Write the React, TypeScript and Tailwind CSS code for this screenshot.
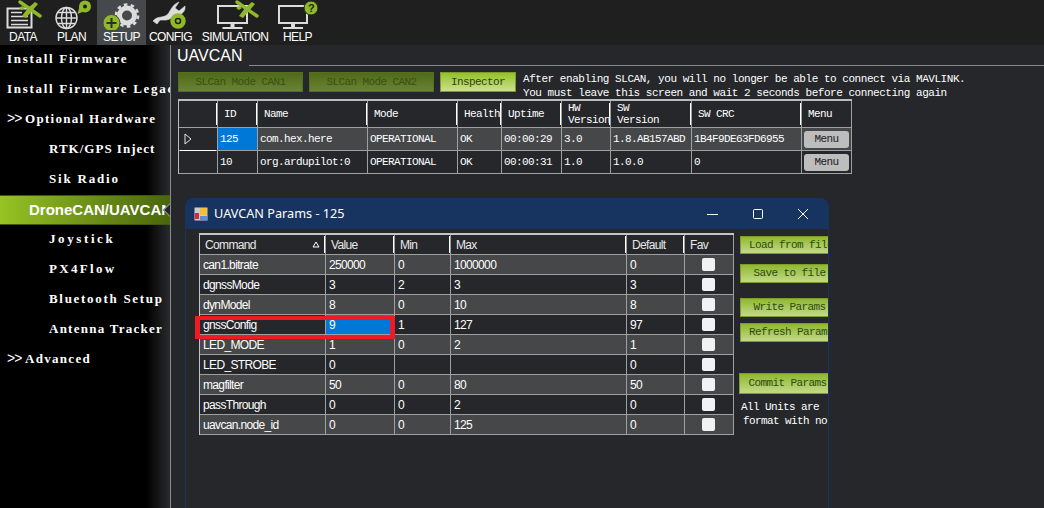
import React from 'react';

const mono = "font-['Liberation_Mono',monospace]";
const GREEN = '#8fb82a';
const GRAY = '#dcdcdc';

const Plane = ({ x, y }: { x: number; y: number }) => (
  <g transform={`translate(${x} ${y})`}>
    <path d="M1 1 L21 15" stroke={GREEN} strokeWidth="3.4" strokeLinecap="round" />
    <path d="M16 1 L19 3 L13 10 L7 17 L3 15 L9 7 Z" fill={GREEN} />
    <path d="M0 7 L3 5 L6 7 L3 9 Z" fill={GREEN} />
  </g>
);

const DataIcon = () => (
  <svg width="46" height="30" viewBox="0 0 46 30" fill="none">
    <path d="M7.5 8.5 H31.5 V27.5 H7.5 Z" stroke={GRAY} strokeWidth="2" />
    <path d="M11 12.5 H22 M11 16.5 H28 M11 20.5 H28 M11 24.5 H28" stroke={GRAY} strokeWidth="1.6" />
    <Plane x={19} y={1} />
  </svg>
);

const PlanIcon = () => (
  <svg width="51" height="30" viewBox="46 0 51 30" fill="none">
    <g stroke={GRAY} strokeWidth="1.4">
      <circle cx="66.5" cy="18" r="10.5" />
      <ellipse cx="66.5" cy="18" rx="5" ry="10.5" />
      <path d="M56 18 H77 M58 12.5 H75 M58 23.5 H75 M66.5 7.5 V28.5" />
    </g>
    <path d="M77.5 14 L80.5 3 L90 9 Z" fill={GREEN} />
    <circle cx="85" cy="6.5" r="6" fill={GREEN} />
    <circle cx="85" cy="6.5" r="2" fill="#1f1f1f" />
  </svg>
);

const SetupIcon = () => (
  <svg width="49" height="30" viewBox="97 0 49 30" fill="none">
    <circle cx="127" cy="15.5" r="7.5" stroke={GRAY} strokeWidth="5" />
    <circle cx="127" cy="15.5" r="11" stroke={GRAY} strokeWidth="2.6" strokeDasharray="3.6 3.3" />
    <circle cx="111.5" cy="23" r="8.5" fill={GREEN} stroke="#46494c" strokeWidth="1" />
    <path d="M106.5 23 H116.5 M111.5 18 V28" stroke="#2b2d2e" strokeWidth="2" />
  </svg>
);

const ConfigIcon = () => (
  <svg width="49" height="30" viewBox="146 0 49 30" fill="none">
    <path d="M153 21 C158 15 163 19 168 14 C171 10 172 5 179 2 L175 8 L179 11 L185 6 C186 13 179 16 173 17 C168 21 164 20 160 20 L157 24 Z" fill={GRAY} stroke={GRAY} strokeWidth="0.6" />
    <circle cx="178" cy="21" r="5.5" stroke={GREEN} strokeWidth="4.5" />
    <circle cx="178" cy="21" r="1.8" fill={GREEN} />
  </svg>
);

const Monitor = ({ x, w }: { x: number; w: number }) => (
  <g stroke={GRAY}>
    <path d={`M${x} 6 H${x + w} V23 H${x} Z`} strokeWidth="2" fill="none" />
    <path d={`M${x + w / 2} 23 V27`} strokeWidth="4" />
    <path d={`M${x + w / 2 - 10} 28 H${x + w / 2 + 10}`} strokeWidth="2" />
  </g>
);

const SimIcon = () => (
  <svg width="80" height="30" viewBox="195 0 80 30" fill="none">
    <Monitor x={218} w={29} />
    <Plane x={236} y={1} />
  </svg>
);

const HelpIcon = () => (
  <svg width="45" height="30" viewBox="275 0 45 30" fill="none">
    <Monitor x={279} w={28} />
    <circle cx="311" cy="8" r="7" fill={GREEN} stroke="#1f1f1f" />
    <text x="311" y="12" textAnchor="middle" fontSize="11" fontWeight="700" fill="#1f1f1f" fontFamily="Liberation Sans">?</text>
  </svg>
);

const navItems = [
  { label: 'DATA', icon: <DataIcon />, w: 'w-[46px]' },
  { label: 'PLAN', icon: <PlanIcon />, w: 'w-[51px]' },
  { label: 'SETUP', icon: <SetupIcon />, w: 'w-[49px] bg-[#46494c]' },
  { label: 'CONFIG', icon: <ConfigIcon />, w: 'w-[49px]' },
  { label: 'SIMULATION', icon: <SimIcon />, w: 'w-[80px]' },
  { label: 'HELP', icon: <HelpIcon />, w: 'w-[45px]' },
];

const sideItems = [
  { label: 'Install Firmware', cls: 'pl-[7px] tracking-[1.7px]' },
  { label: 'Install Firmware Legacy', cls: 'pl-[7px] tracking-[1.7px]' },
  { label: 'Optional Hardware', cls: 'pl-[7px] tracking-[1.3px]', arrows: true },
  { label: 'RTK/GPS Inject', cls: 'pl-[49px] tracking-[1px]' },
  { label: 'Sik Radio', cls: 'pl-[49px] tracking-[1.8px]' },
  { label: 'DroneCAN/UAVCAN', cls: 'pl-[29px]', active: true },
  { label: 'Joystick', cls: 'pl-[49px] tracking-[2.6px]' },
  { label: 'PX4Flow', cls: 'pl-[49px] tracking-[2.3px]' },
  { label: 'Bluetooth Setup', cls: 'pl-[49px] tracking-[1.7px]' },
  { label: 'Antenna Tracker', cls: 'pl-[49px] tracking-[1.25px]' },
  { label: 'Advanced', cls: 'pl-[7px] tracking-[1.3px]', arrows: true },
];

const nodeCols = 'grid grid-cols-[39px_40px_110px_90px_44px_60px_49px_81px_110px_50px]';
const nodeHeaders = ['', 'ID', 'Name', 'Mode', 'Health', 'Uptime', 'HW|Version', 'SW|Version', 'SW CRC', 'Menu'];
const nodes = [
  { bg: 'bg-[#464749]', id: '125', cells: ['com.hex.here', 'OPERATIONAL', 'OK', '00:00:29', '3.0', '1.8.AB157ABD', '1B4F9DE63FD6955'], sel: true },
  { bg: 'bg-[#26272a]', id: '10', cells: ['org.ardupilot:0', 'OPERATIONAL', 'OK', '00:00:31', '1.0', '1.0.0', '0'], sel: false },
];

const paramCols = 'grid grid-cols-[126px_69px_56px_176px_58px_49px]';
const paramHeaders = ['Command', 'Value', 'Min', 'Max', 'Default', 'Fav'];
const params = [
  ['can1.bitrate', '250000', '0', '1000000', '0'],
  ['dgnssMode', '3', '2', '3', '3'],
  ['dynModel', '8', '0', '10', '8'],
  ['gnssConfig', '9', '1', '127', '97'],
  ['LED_MODE', '1', '0', '2', '1'],
  ['LED_STROBE', '0', '', '', '0'],
  ['magfilter', '50', '0', '80', '50'],
  ['passThrough', '0', '0', '2', '0'],
  ['uavcan.node_id', '0', '0', '125', '0'],
];

const greenBtn = `flex items-center justify-center whitespace-nowrap ${mono} text-[11px] tracking-[-0.6px] text-[#2f4a10] bg-gradient-to-b from-[#8fb82a] to-[#c3da84] border border-[#7d9c2c]`;

const NodeTable = () => (
  <div className={`ml-[7px] mt-[7px] w-fit border-l border-t-2 border-[#bdbdbd] ${mono} text-[11px] tracking-[-0.6px] text-white`}>
    <div className={`${nodeCols} h-[27px] border-b border-[#a0a0a0]`}>
      {nodeHeaders.map((h, i) => (
        <div key={i} className="relative flex flex-col items-start justify-center border-r border-[#a0a0a0] pl-[6px] leading-[12px]">
          {i > 0 && <span className="absolute -left-[2px] top-[2px] bottom-[2px] w-[1px] bg-white" />}
          {h.split('|').map((part) => (
            <span key={part}>{part}</span>
          ))}
        </div>
      ))}
    </div>
    {nodes.map((n) => (
      <div key={n.id} className={`${nodeCols} h-[23px] border-b border-[#a0a0a0] ${n.bg}`}>
        <div className="relative flex items-center border-r border-[#a0a0a0] bg-[#26272a] pl-[5px]">
          {n.sel && (
            <>
              <svg width="8" height="12" viewBox="0 0 8 12" fill="none">
                <path d="M1 1 L7 6 L1 11 Z" stroke="#e8e8e8" strokeWidth="1" />
              </svg>
              <span className="absolute left-[1px] right-[1px] -bottom-[1px] h-[1px] bg-white" />
            </>
          )}
        </div>
        <div className={`flex items-center border-r border-[#a0a0a0] pl-[2px] ${n.sel ? 'bg-[#0078d7]' : ''}`}>{n.id}</div>
        {n.cells.map((c, i) => (
          <div key={i} className="flex items-center overflow-hidden whitespace-nowrap border-r border-[#a0a0a0] pl-[2px]">{c}</div>
        ))}
        <div className="flex items-center justify-center border-r border-[#a0a0a0]">
          <div className="flex h-[17px] w-[45px] items-center justify-center rounded-[3px] bg-[#bdbdbd] text-[#1a1a1a]">Menu</div>
        </div>
      </div>
    ))}
  </div>
);

const ParamsWindow = () => (
  <div className="absolute left-[14px] top-[153px] h-[320px] w-[644px] overflow-hidden rounded-t-[8px] border-x border-[#17335f] bg-[#26272a]">
    <div className="flex h-[31px] items-center bg-[#17335f] pl-[8px] text-white">
      <svg width="14" height="14" viewBox="0 0 14 14">
        <rect x="0.5" y="0.5" width="13" height="13" fill="#c9ccd6" />
        <rect x="6" y="1" width="7" height="7" fill="#f2c230" />
        <rect x="1" y="6" width="4" height="6" fill="#c8332c" />
        <rect x="6" y="9" width="7" height="4" fill="#5b8fd8" />
      </svg>
      <span className="ml-[6px] font-['Noto_Sans',sans-serif] text-[12.7px]">UAVCAN Params - 125</span>
      <div className="ml-auto flex items-center">
        <svg width="45" height="12" viewBox="0 0 45 12" fill="none" stroke="#fff" strokeWidth="1">
          <path d="M0 6.5 H11" />
        </svg>
        <svg width="45" height="12" viewBox="0 0 45 12" fill="none" stroke="#fff" strokeWidth="1">
          <rect x="1.5" y="1.5" width="9" height="9" rx="1" />
        </svg>
        <svg width="31" height="12" viewBox="0 0 31 12" fill="none" stroke="#fff" strokeWidth="1">
          <path d="M1 1 L11 11 M11 1 L1 11" />
        </svg>
      </div>
    </div>
    <div className="flex items-start pl-[13px] pt-[4px]">
      <div className="relative w-fit border-l border-t-2 border-[#c4c4c4] font-['Liberation_Sans',sans-serif] text-[12px] tracking-[-0.65px] text-white">
        <div className={`${paramCols} h-[20px] border-b border-[#a0a0a0]`}>
          {paramHeaders.map((h, i) => (
            <div key={h} className="relative flex items-center border-r border-[#a0a0a0] pl-[5px] text-[#e8e8e8]">
              {i > 0 && <span className="absolute -left-[2px] top-[1px] bottom-[1px] w-[1px] bg-white" />}
              {h}
              {i === 0 && (
                <svg className="absolute right-[5px] top-[6px]" width="8" height="7" viewBox="0 0 8 7" fill="none" stroke="#fff">
                  <path d="M4 1 L7 6 H1 Z" />
                </svg>
              )}
            </div>
          ))}
        </div>
        {params.map((row, r) => (
          <div key={row[0]} className={`${paramCols} h-[20px] border-b border-[#a0a0a0] ${r % 2 === 0 ? 'bg-[#464749]' : 'bg-[#26272a]'}`}>
            {row.map((c, i) => (
              <div key={i} className={`flex items-center border-r border-[#a0a0a0] pl-[3px] ${r === 3 && i === 1 ? 'bg-[#0078d7]' : ''}`}>{c}</div>
            ))}
            <div className="flex items-center justify-center border-r border-[#a0a0a0]">
              <span className="mr-[1px] h-[13px] w-[13px] rounded-[2px] bg-[#f2f2f2]" />
            </div>
          </div>
        ))}
        <div className="absolute left-[-5px] top-[81px] h-[23px] w-[200px] border-[4px] border-l-[5px] border-r-[5px] border-[#ed1c24]" />
      </div>
      <div className="ml-[6px] flex w-[87px] shrink-0 flex-col">
        <div className={`${greenBtn} mt-[3px] h-[18px] w-[102px]`}>Load from file</div>
        <div className={`${greenBtn} mt-[10px] h-[19px] w-[96px] pl-[3px]`}>Save to file</div>
        <div className={`${greenBtn} mt-[15px] h-[19px] w-[96px] pl-[3px]`}>Write Params</div>
        <div className={`${greenBtn} mt-[6px] h-[19px] w-[102px]`}>Refresh Params</div>
        <div className={`${greenBtn} -ml-px mt-[31px] h-[21px] w-[97px]`}>Commit Params</div>
        <div className={`mt-[6px] w-[200px] whitespace-nowrap pl-[1px] ${mono} text-[11px] leading-[14px] tracking-[-0.6px] text-white`}>
          All Units are
          <br />
          <span className="pl-[2px]">format with no</span>
        </div>
      </div>
    </div>
  </div>
);

export default function App() {
  return (
    <div className="flex h-[508px] w-[1044px] flex-col overflow-hidden bg-[#26272a]">
      <nav className="flex h-[45px] shrink-0 bg-[#1f1f1f] font-['Liberation_Sans',sans-serif] text-[12px] tracking-[-0.6px] text-white">
        {navItems.map((n) => (
          <div key={n.label} className={`flex flex-col items-center ${n.w}`}>
            <div className="h-[30px]">{n.icon}</div>
            <span className="leading-[14px]">{n.label}</span>
          </div>
        ))}
      </nav>
      <div className="flex min-h-0 flex-1">
        <aside className="w-[171px] shrink-0 overflow-hidden border-r border-[#8a8a8a] bg-[linear-gradient(to_right,#000_86%,#2a2b2d_100%)] font-['Liberation_Serif',serif] text-[13px] font-bold text-white">
          {sideItems.map((s) =>
            s.active ? (
              <div key={s.label} className="relative flex h-[30px] items-center overflow-hidden whitespace-nowrap border-y border-[#3f5a10] bg-gradient-to-r from-[#97c324] to-[#4a650c] pl-[29px] font-['Liberation_Sans',sans-serif] text-[15px]">
                {s.label}
                <span className="absolute -right-[5px] top-[9px] h-[10px] w-[10px] rotate-45 border border-[#a0a0a0] bg-[#26272a]" />
              </div>
            ) : (
              <div key={s.label} className={`flex h-[30px] items-center whitespace-nowrap pb-[3px] ${s.cls}`}>
                {s.arrows && <span className="mr-[3px] w-[15px] font-['Liberation_Sans',sans-serif] text-[14px] font-normal tracking-[-1px]">&gt;&gt;</span>}
                {s.label}
              </div>
            ),
          )}
        </aside>
        <main className="relative min-w-0 flex-1">
          <div className="flex h-[21px] items-end">
            <h1 className="w-[78px] pl-[6px] font-['Liberation_Sans',sans-serif] text-[16px] leading-[20px] text-white">UAVCAN</h1>
            <div className="flex-1 border-b border-[#8a8a8a]" />
          </div>
          <div className="ml-[7px] mt-[6px] flex h-[20px]">
            <div className={`flex w-[125px] items-center justify-center border border-[#55701d] bg-gradient-to-b from-[#4f6a18] to-[#6b8335] ${mono} text-[11px] tracking-[-0.6px] text-[#3a5012]`}>SLCan Mode CAN1</div>
            <div className={`ml-[6px] flex w-[125px] items-center justify-center border border-[#55701d] bg-gradient-to-b from-[#4f6a18] to-[#6b8335] ${mono} text-[11px] tracking-[-0.6px] text-[#3a5012]`}>SLCan Mode CAN2</div>
            <div className={`ml-[6px] flex w-[76px] items-center justify-center border border-[#7d9c2c] bg-gradient-to-b from-[#94c11f] to-[#cde08a] ${mono} text-[11px] tracking-[-0.6px] text-[#2f3f10]`}>Inspector</div>
            <p className={`ml-[7px] whitespace-nowrap ${mono} text-[11px] leading-[14px] tracking-[-0.46px] text-white`}>
              After enabling SLCAN, you will no longer be able to connect via MAVLINK.
              <br />
              You must leave this screen and wait 2 seconds before connecting again
            </p>
          </div>
          <NodeTable />
          <ParamsWindow />
        </main>
      </div>
    </div>
  );
}
